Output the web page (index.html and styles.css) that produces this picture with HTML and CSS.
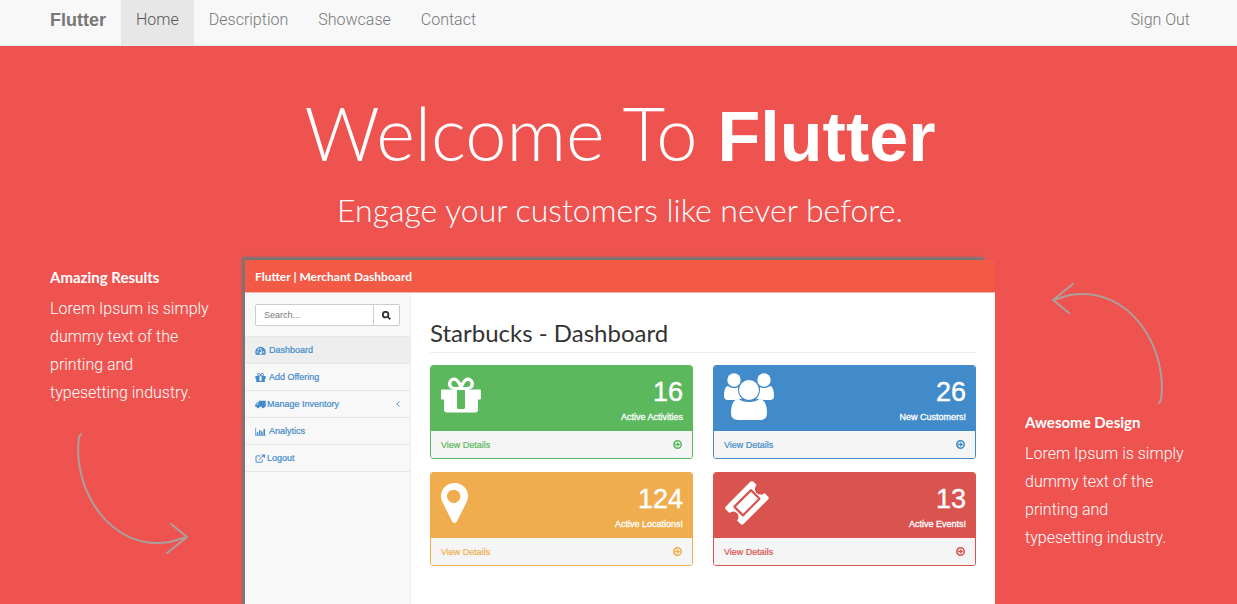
FILE: index.html
```html
<!DOCTYPE html>
<html lang="en">
<head>
<meta charset="utf-8">
<title>Flutter</title>
<link rel="stylesheet" href="styles.css">
</head>
<body>
<svg class="sprite" aria-hidden="true">
  <symbol id="i-arrow" viewBox="0 0 14 14"><circle cx="7" cy="7" r="5.700" fill="none" stroke="currentColor" stroke-width="2.400"/><path d="M3 6H6.500V3L11 7 6.500 11V8H3Z" fill="currentColor"/></symbol>
  <symbol id="i-gift" viewBox="0 0 40 35"><path fill="currentColor" fill-rule="evenodd" d="M0 13Q0 12 1 12H14C9 12 7 9.500 7 6.500C7 3 9.500 0 13 0C16 0 17.500 2 20 5.500C22.500 2 24 0 27 0C30.500 0 33 3 33 6.500C33 9.500 31 12 26 12H39Q40 12 40 13V21Q40 22 39 22H37V32Q37 35 34 35H6Q3 35 3 32V22H1Q0 22 0 21ZM13 3.200A3.200 3.200 0 0 0 13 9.500H18C17 6.500 15 3.200 13 3.200ZM27 3.200C25 3.200 23 6.500 22 9.500H27A3.200 3.200 0 0 0 27 3.200ZM16 12.500V30Q16 31.500 17.500 31.500H22.500Q24 31.500 24 30V12.500Z"/></symbol>
  <symbol id="i-users" viewBox="0 0 50 47"><g fill="currentColor"><circle cx="10" cy="7" r="6.700"/><circle cx="40" cy="7" r="6.700"/><path d="M4 13C6 15 12 16 14 14V17C14 21 16 24 18 26H15Q12 27 10 27H4Q0 27 0 23C0 19 1 13 4 13ZM46 13C44 15 38 16 36 14V17C36 21 34 24 32 26H35Q38 27 40 27H46Q50 27 50 23C50 19 49 13 46 13Z"/><circle cx="25" cy="17" r="10"/><path d="M15 26C18 30 32 30 35 26C41 26 43 33 43 40Q43 47 36 47H14Q7 47 7 40C7 33 9 26 15 26Z"/></g></symbol>
  <symbol id="i-pin" viewBox="0 0 27 40"><path fill="currentColor" fill-rule="evenodd" d="M13.500 0A13.300 13.300 0 0 1 27 13.300C27 16 26.300 17.500 25.600 19L16 38.300Q15.200 40 13.500 40T11 38.300L1.400 19C.7 17.500 0 16 0 13.300A13.300 13.300 0 0 1 13.500 0ZM13.500 6.700A6.700 6.700 0 1 0 13.500 20A6.700 6.700 0 0 0 13.500 6.700Z"/></symbol>
  <symbol id="i-ticket" viewBox="0 0 44 44"><path fill="currentColor" fill-rule="evenodd" d="M25.500.6Q27 0 28.300.6L31.600 4A5 5 0 0 0 39.500 12L43 15.500Q44.500 17 43 18.500L18.500 43Q17 44.500 15.500 43L12 39.500A5 5 0 0 0 4.500 32L.8 28.500Q-.5 27 .8 25.500ZM25 8.500 8.700 24.700Q7.700 25.800 8.700 26.800L16.800 35Q18 36 19 35L35 18.700Q36 17.700 35 16.700L27 8.500Q26 7.500 25 8.500ZM26 10.700 33 17.700 18 32.800 11 25.800Z"/></symbol>
  <symbol id="i-dash" viewBox="0 0 14 12"><path fill="currentColor" fill-rule="evenodd" d="M7 1A7 7 0 0 0 0 8Q0 10 1 11.500H13Q14 10 14 8A7 7 0 0 0 7 1ZM2 7h2v2H2ZM3 3.800h2v2H3ZM6 2.500h2v2H6ZM10 7h2v2h-2ZM8.500 4.500l1 .3L8.200 8A1.600 1.600 0 1 1 7.200 7.800Z"/></symbol>
  <symbol id="i-truck" viewBox="0 0 14 12"><path fill="currentColor" fill-rule="evenodd" d="M5 1H14V9H12.500A1.700 1.700 0 0 1 9 9H5.500A1.700 1.700 0 0 1 2 9H0V6L2.500 3H5ZM1.300 6H4V4.200H3Z"/><circle cx="3.700" cy="9.500" r="1.500" fill="currentColor"/><circle cx="10.700" cy="9.500" r="1.500" fill="currentColor"/></symbol>
  <symbol id="i-chart" viewBox="0 0 14 12"><path fill="none" stroke="currentColor" d="M.5 1V11.500H14"/><path fill="currentColor" d="M2 7h2v3.500H2ZM5 4h2v6.500H5ZM8 5.500h2v5H8ZM11 2.500h2v8h-2Z"/></symbol>
  <symbol id="i-out" viewBox="0 0 14 12"><path fill="none" stroke="currentColor" stroke-width="1.300" d="M7 2.500H2Q1 2.500 1 3.500V10Q1 11 2 11H8.500Q9.500 11 9.500 10V7.500M5 7.500 11 2"/><path fill="currentColor" d="M8 .5H13V5.500Z"/></symbol>
</svg>

<nav class="navbar">
  <a class="brand" href="#">Flutter</a>
  <ul class="nav-list">
    <li><a class="nav-link active" href="#">Home</a></li>
    <li><a class="nav-link" href="#">Description</a></li>
    <li><a class="nav-link" href="#">Showcase</a></li>
    <li><a class="nav-link" href="#">Contact</a></li>
  </ul>
  <a class="sign-out" href="#">Sign Out</a>
</nav>

<main class="hero">
  <h1 class="hero-title">Welcome To <strong>Flutter</strong></h1>
  <p class="hero-subtitle">Engage your customers like never before.</p>

  <div class="hero-grid">
    <section class="feature">
      <h2 class="feature-title">Amazing Results</h2>
      <p class="feature-text">Lorem Ipsum is simply dummy text of the printing and typesetting industry.</p>
      <svg class="swoop swoop-left" viewBox="0 0 112 122" aria-hidden="true"><path d="M4 1 2 4C-5 56 33 119 93 109L110 104M94 91 110 104 90 120"/></svg>
    </section>

    <div class="dashboard">
      <header class="dash-header">Flutter | Merchant Dashboard</header>
      <div class="dash-body">
        <aside class="sidebar">
          <form class="search">
            <input class="search-input" type="text" placeholder="Search..." aria-label="Search">
            <button class="search-button" type="button" aria-label="Search"><svg viewBox="0 0 10 10"><circle cx="4" cy="4" r="3.100"/><path d="M6.300 6.300 9.200 9.200"/></svg></button>
          </form>
          <ul class="menu">
            <li><a class="menu-link current" href="#"><svg><use href="#i-dash"/></svg>Dashboard</a></li>
            <li><a class="menu-link" href="#"><svg><use href="#i-gift"/></svg>Add Offering</a></li>
            <li><a class="menu-link tight" href="#"><svg><use href="#i-truck"/></svg>Manage Inventory<svg class="chevron" viewBox="0 0 4 6"><path d="M3.300.5.8 3 3.300 5.500"/></svg></a></li>
            <li><a class="menu-link" href="#"><svg><use href="#i-chart"/></svg>Analytics</a></li>
            <li><a class="menu-link tight" href="#"><svg><use href="#i-out"/></svg>Logout</a></li>
          </ul>
        </aside>
        <div class="content">
          <h2 class="content-title">Starbucks - Dashboard</h2>
          <div class="cards">
            <article class="card green">
              <div class="card-top"><svg class="gift"><use href="#i-gift"/></svg><div class="stat"><div class="number">16</div><div class="label">Active Activities</div></div></div>
              <a class="card-foot" href="#">View Details<svg><use href="#i-arrow"/></svg></a>
            </article>
            <article class="card blue">
              <div class="card-top"><svg class="users"><use href="#i-users"/></svg><div class="stat"><div class="number">26</div><div class="label">New Customers!</div></div></div>
              <a class="card-foot" href="#">View Details<svg><use href="#i-arrow"/></svg></a>
            </article>
            <article class="card orange">
              <div class="card-top"><svg class="pin"><use href="#i-pin"/></svg><div class="stat"><div class="number">124</div><div class="label">Active Locations!</div></div></div>
              <a class="card-foot" href="#">View Details<svg><use href="#i-arrow"/></svg></a>
            </article>
            <article class="card red">
              <div class="card-top"><svg class="ticket"><use href="#i-ticket"/></svg><div class="stat"><div class="number">13</div><div class="label">Active Events!</div></div></div>
              <a class="card-foot" href="#">View Details<svg><use href="#i-arrow"/></svg></a>
            </article>
          </div>
        </div>
      </div>
    </div>

    <section class="feature feature-right">
      <svg class="swoop swoop-right" viewBox="0 0 112 122" aria-hidden="true"><path d="M108 121 110 118C117 66 79 3 19 13L2 18M18 31 2 18 22 2"/></svg>
      <h2 class="feature-title">Awesome Design</h2>
      <p class="feature-text">Lorem Ipsum is simply dummy text of the printing and typesetting industry.</p>
    </section>
  </div>
</main>
</body>
</html>
```
FILE: styles.css
```css
* { box-sizing: border-box; }

body {
  margin: 0;
  height: 100vh;
  overflow: hidden;
  display: flex;
  flex-direction: column;
  background: #ef5350;
  font-family: "Liberation Sans", Arial, sans-serif;
}

h1, h2, p, ul { margin: 0; padding: 0; }
ul { list-style: none; }
a { color: inherit; text-decoration: none; }
.sprite { display: none; }

.navbar {
  display: flex;
  flex: none;
  height: 46px;
  padding: 0 47px 0 50px;
  background: #f8f8f8;
  border-bottom: 1px solid #e7e7e7;
  color: #777;
  font: 300 16px/40px Roboto, sans-serif;
}
.brand {
  margin-right: 15px;
  font: bold 18px/40px "Liberation Sans", Arial, sans-serif;
}
.nav-list { display: flex; }
.nav-link { display: block; height: 45px; padding: 0 15px; }
.nav-link.active { background: #e7e7e7; color: #555; }
.sign-out { margin-left: auto; }

.hero { flex: 1; min-height: 0; padding: 47px 47px 0 50px; overflow: hidden; color: #fff; }
.hero-title {
  text-align: center;
  font: 300 74px/80px Lato, sans-serif;
}
.hero-title strong { font: bold 70px/80px "Liberation Sans", Arial, sans-serif; }
.hero-subtitle {
  margin-top: 15px;
  text-align: center;
  font: 300 32px/36px Lato, sans-serif;
}
.hero-grid {
  display: grid;
  grid-template-columns: 165fr 750fr 165fr;
  gap: 30px;
  align-items: start;
  margin-top: 32px;
}

.feature { padding-top: 7px; }
.feature-title { font: 700 15px/20px Lato, sans-serif; }
.feature-text { margin-top: 8px; padding-right: 4px; font: 300 16px/28px Roboto, sans-serif; }
.swoop {
  display: block;
  width: 112px;
  height: 122px;
  fill: none;
  stroke: #aaa09e;
  stroke-width: 2;
  stroke-linecap: round;
  stroke-linejoin: round;
}
.swoop-left { margin: 26px 0 0 27px; }
.feature-right { padding-top: 22px; }
.swoop-right { margin: 0 0 8px 26px; }

.dashboard {
  min-height: 400px;
  background: #fff;
  color: #333;
  box-shadow: -7px -7px 2px -4px #777;
}
.dash-header {
  height: 33px;
  padding-left: 10px;
  background: #f25a46;
  border-bottom: 1px solid #f7b5aa;
  color: #fff;
  font: 700 12px/33px Lato, sans-serif;
}
.dash-body { display: flex; min-height: 367px; }
.sidebar { flex: none; width: 166px; background: #f8f8f8; border-right: 1px solid #eee; font-size: 9px; }
.search { display: flex; height: 44px; padding: 11px 10px 10px; border-bottom: 1px solid #e7e7e7; }
.search-input {
  flex: 1;
  min-width: 0;
  padding: 0 8px;
  background: #fff;
  border: 1px solid #ccc;
  border-radius: 2px 0 0 2px;
  font: 9px "Liberation Sans", Arial, sans-serif;
}
.search-input::placeholder { color: #777; }
.search-button {
  display: grid;
  place-items: center;
  width: 26px;
  padding: 0;
  background: #fff;
  border: 1px solid #ccc;
  border-left: 0;
  border-radius: 0 2px 2px 0;
}
.search-button svg { width: 9px; height: 9px; fill: none; stroke: #333; stroke-width: 2; }
.menu-link {
  display: flex;
  align-items: center;
  gap: 3px;
  height: 27px;
  padding: 0 10px;
  border-bottom: 1px solid #e7e7e7;
  color: #428bca;
  -webkit-text-stroke: 0.2px;
}
.menu-link.tight { gap: 1px; }
.menu-link.current { background: #eee; }
.menu-link svg { width: 11px; height: 9px; }
.menu-link .chevron { width: 4px; height: 6px; margin-left: auto; fill: none; stroke: #428bca; stroke-width: 1; }

.content { flex: 1; padding: 24px 19px 0 19px; }
.content-title {
  height: 36px;
  border-bottom: 1px solid #eee;
  font: 400 24px/32px Lato, sans-serif;
}
.cards { display: grid; grid-template-columns: 1fr 1fr; gap: 13px 20px; margin-top: 12px; }
.card { border: 1px solid currentColor; border-radius: 3px; overflow: hidden; }
.green { color: #5cb85c; }
.blue { color: #428bca; }
.orange { color: #f0ad4e; }
.red { color: #d9534f; }
.card-top { display: flex; justify-content: space-between; height: 65px; padding: 10px 9px 0 10px; background: currentColor; }
.card-top > * { color: #fff; }
.gift { width: 40px; height: 36px; margin-top: 1px; }
.users { width: 50px; height: 47px; margin-top: -3px; }
.pin { width: 27px; height: 40px; }
.ticket { width: 44px; height: 44px; margin: -2px 0 0 1px; }
.stat { text-align: right; }
.number { font-size: 27px; line-height: 32px; -webkit-text-stroke: 0.4px; }
.label { font-size: 9px; line-height: 19px; -webkit-text-stroke: 0.3px; }
.card-foot {
  display: flex;
  align-items: center;
  justify-content: space-between;
  height: 27px;
  padding: 0 10px;
  background: #f5f5f5;
  font-size: 9px;
  -webkit-text-stroke: 0.2px;
}
.card-foot svg { width: 9px; height: 9px; }
```
